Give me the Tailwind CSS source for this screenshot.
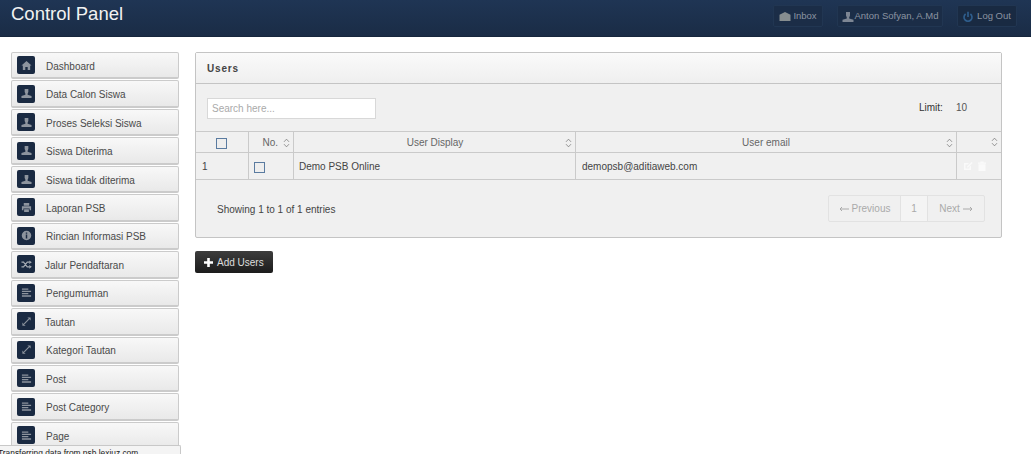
<!DOCTYPE html>
<html lang="en">
<head>
<meta charset="UTF-8" />
<title>Control Panel</title>
<script src="https://cdn.jsdelivr.net/npm/@tailwindcss/browser@4"></script>
</head>
<body class="relative h-[454px] w-[1031px] overflow-hidden bg-white font-['Liberation_Sans',Arial,sans-serif] text-[10px] text-[#4a4a4a]">
<svg class="hidden">
	<symbol id="i-home" viewBox="0 0 12 12"><path fill="currentColor" d="M6 1 L11.500 6 L10 6 L10 11 L7.300 11 L7.300 7.500 L4.700 7.500 L4.700 11 L2 11 L2 6 L.5 6 Z"/></symbol>
	<symbol id="i-user" viewBox="0 0 12 12"><path fill="currentColor" d="M4 1 h4 v3.400 L7.200 6.400 v1 L11.500 8.800 V11 H.5 V8.800 L4.800 7.400 v-1 L4 4.400 Z"/></symbol>
	<symbol id="i-print" viewBox="0 0 12 12"><path fill="currentColor" d="M3 1h6v3H3z M1 4.700h10V9H9.400V7.200H2.600V9H1z M3.400 8h5.200v3H3.400z"/></symbol>
	<symbol id="i-info" viewBox="0 0 12 12"><path fill="currentColor" fill-rule="evenodd" d="M6 .8a5.200 5.200 0 1 0 0 10.400A5.200 5.200 0 0 0 6 .8z M5.200 2.600h1.600v1.600H5.200z M5.200 5h1.600v4.400H5.200z"/></symbol>
	<symbol id="i-shuffle" viewBox="0 0 12 12"><path fill="none" stroke="currentColor" stroke-width="1.300" d="M.5 3.500h2.300l4 5h2.400 M.5 8.500h2.300l4-5h2.400"/><path fill="currentColor" d="M9 1.500l2.800 2-2.800 2z M9 6.500l2.800 2-2.800 2z"/></symbol>
	<symbol id="i-align" viewBox="0 0 12 12"><path fill="currentColor" d="M1 1.500h7v1.500H1z M1 4h10v1.500H1z M1 6.500h7V8H1z M1 9h10v1.500H1z"/></symbol>
	<symbol id="i-resize" viewBox="0 0 12 12"><path fill="none" stroke="currentColor" stroke-width="1.200" d="M3.500 8.500 L8.500 3.500"/><path fill="currentColor" d="M7 1.500h3.500V5z M5 10.500H1.500V7z"/></symbol>
	<symbol id="i-sort" viewBox="0 0 8 12"><path fill="none" stroke="currentColor" stroke-width=".8" d="M1 4.600 L4 1.400 L7 4.600 M1 7.400 L4 10.600 L7 7.400"/></symbol>
</svg>

<header class="flex h-[37px] items-start justify-between border-b border-[#16263c] bg-gradient-to-b from-[#1f3554] to-[#1a2c46]">
	<h1 class="pl-[11px] pt-[2px] text-[18.500px] leading-[24px] text-[#f2f2f2]">Control Panel</h1>
	<div class="flex gap-[14px] pr-[14px] pt-[5px] text-[9.5px] text-[#8b94a1]">
		<a class="flex h-[22px] w-[50px] items-center justify-center gap-[2px] rounded-[2px] border border-[#213652] bg-[#1b2d47] pt-[1px]">
			<svg class="h-[11px] w-[12px] text-[#868d8f]" viewBox="0 0 13 12"><path fill="currentColor" d="M.5 4 L6.500 1 L12.500 4 V11 H.5 Z"/></svg>Inbox
		</a>
		<a class="flex h-[22px] w-[106px] items-center justify-center gap-[1px] rounded-[2px] border border-[#213652] bg-[#1b2d47] pt-[1px]">
			<svg class="h-[12px] w-[12px] text-[#7d8694]"><use href="#i-user"/></svg>Anton Sofyan, A.Md
		</a>
		<a class="flex h-[22px] w-[60px] items-center justify-center gap-[4px] rounded-[2px] border border-[#213652] bg-[#192a42] pt-[1px]">
			<svg class="h-[12px] w-[10px] text-[#2f5f8f]" viewBox="0 0 10 12"><path fill="none" stroke="currentColor" stroke-width="1.600" d="M5 .8V6 M2.600 3A4 4 0 1 0 7.400 3"/></svg>Log Out
		</a>
	</div>
</header>

<div class="flex items-start gap-4 pl-[11px] pt-[15px]">
	<nav class="flex w-[168px] shrink-0 flex-col gap-px">
		<a class="flex h-[27.46px] items-center rounded-[2px] border border-b-2 border-[#cbcbcb] bg-gradient-to-b from-[#f8f8f8] to-[#e9e9e9] pl-[5px]"><span class="flex h-[18px] w-[18px] items-center justify-center rounded-[2px] bg-[#1a2a42] text-[#8d949e]"><svg class="h-[11px] w-[11px]"><use href="#i-home"/></svg></span><span class="ml-[11px] mt-[2px]">Dashboard</span></a>
		<a class="flex h-[27.46px] items-center rounded-[2px] border border-b-2 border-[#cbcbcb] bg-gradient-to-b from-[#f8f8f8] to-[#e9e9e9] pl-[5px]"><span class="flex h-[18px] w-[18px] items-center justify-center rounded-[2px] bg-[#1a2a42] text-[#8d949e]"><svg class="h-[11px] w-[11px]"><use href="#i-user"/></svg></span><span class="ml-[11px] mt-[2px]">Data Calon Siswa</span></a>
		<a class="flex h-[27.46px] items-center rounded-[2px] border border-b-2 border-[#cbcbcb] bg-gradient-to-b from-[#f8f8f8] to-[#e9e9e9] pl-[5px]"><span class="flex h-[18px] w-[18px] items-center justify-center rounded-[2px] bg-[#1a2a42] text-[#8d949e]"><svg class="h-[11px] w-[11px]"><use href="#i-user"/></svg></span><span class="ml-[11px] mt-[2px]">Proses Seleksi Siswa</span></a>
		<a class="flex h-[27.46px] items-center rounded-[2px] border border-b-2 border-[#cbcbcb] bg-gradient-to-b from-[#f8f8f8] to-[#e9e9e9] pl-[5px]"><span class="flex h-[18px] w-[18px] items-center justify-center rounded-[2px] bg-[#1a2a42] text-[#8d949e]"><svg class="h-[11px] w-[11px]"><use href="#i-user"/></svg></span><span class="ml-[11px] mt-[2px]">Siswa Diterima</span></a>
		<a class="flex h-[27.46px] items-center rounded-[2px] border border-b-2 border-[#cbcbcb] bg-gradient-to-b from-[#f8f8f8] to-[#e9e9e9] pl-[5px]"><span class="flex h-[18px] w-[18px] items-center justify-center rounded-[2px] bg-[#1a2a42] text-[#8d949e]"><svg class="h-[11px] w-[11px]"><use href="#i-user"/></svg></span><span class="ml-[11px] mt-[2px]">Siswa tidak diterima</span></a>
		<a class="flex h-[27.46px] items-center rounded-[2px] border border-b-2 border-[#cbcbcb] bg-gradient-to-b from-[#f8f8f8] to-[#e9e9e9] pl-[5px]"><span class="flex h-[18px] w-[18px] items-center justify-center rounded-[2px] bg-[#1a2a42] text-[#8d949e]"><svg class="h-[11px] w-[11px]"><use href="#i-print"/></svg></span><span class="ml-[11px] mt-[2px]">Laporan PSB</span></a>
		<a class="flex h-[27.46px] items-center rounded-[2px] border border-b-2 border-[#cbcbcb] bg-gradient-to-b from-[#f8f8f8] to-[#e9e9e9] pl-[5px]"><span class="flex h-[18px] w-[18px] items-center justify-center rounded-[2px] bg-[#1a2a42] text-[#8d949e]"><svg class="h-[11px] w-[11px]"><use href="#i-info"/></svg></span><span class="ml-[11px] mt-[2px]">Rincian Informasi PSB</span></a>
		<a class="flex h-[27.46px] items-center rounded-[2px] border border-b-2 border-[#cbcbcb] bg-gradient-to-b from-[#f8f8f8] to-[#e9e9e9] pl-[5px]"><span class="flex h-[18px] w-[18px] items-center justify-center rounded-[2px] bg-[#1a2a42] text-[#a4aab2]"><svg class="h-[11px] w-[11px]"><use href="#i-shuffle"/></svg></span><span class="ml-[10px] mt-[2px]">Jalur Pendaftaran</span></a>
		<a class="flex h-[27.46px] items-center rounded-[2px] border border-b-2 border-[#cbcbcb] bg-gradient-to-b from-[#f8f8f8] to-[#e9e9e9] pl-[5px]"><span class="flex h-[18px] w-[18px] items-center justify-center rounded-[2px] bg-[#1a2a42] text-[#8d949e]"><svg class="h-[11px] w-[11px]"><use href="#i-align"/></svg></span><span class="ml-[11px] mt-[2px]">Pengumuman</span></a>
		<a class="flex h-[27.46px] items-center rounded-[2px] border border-b-2 border-[#cbcbcb] bg-gradient-to-b from-[#f8f8f8] to-[#e9e9e9] pl-[5px]"><span class="flex h-[18px] w-[18px] items-center justify-center rounded-[2px] bg-[#1a2a42] text-[#8d949e]"><svg class="h-[11px] w-[11px]"><use href="#i-resize"/></svg></span><span class="ml-[10px] mt-[2px]">Tautan</span></a>
		<a class="flex h-[27.46px] items-center rounded-[2px] border border-b-2 border-[#cbcbcb] bg-gradient-to-b from-[#f8f8f8] to-[#e9e9e9] pl-[5px]"><span class="flex h-[18px] w-[18px] items-center justify-center rounded-[2px] bg-[#1a2a42] text-[#8d949e]"><svg class="h-[11px] w-[11px]"><use href="#i-resize"/></svg></span><span class="ml-[11px] mt-[2px]">Kategori Tautan</span></a>
		<a class="flex h-[27.46px] items-center rounded-[2px] border border-b-2 border-[#cbcbcb] bg-gradient-to-b from-[#f8f8f8] to-[#e9e9e9] pl-[5px]"><span class="flex h-[18px] w-[18px] items-center justify-center rounded-[2px] bg-[#1a2a42] text-[#8d949e]"><svg class="h-[11px] w-[11px]"><use href="#i-align"/></svg></span><span class="ml-[11px] mt-[2px]">Post</span></a>
		<a class="flex h-[27.46px] items-center rounded-[2px] border border-b-2 border-[#cbcbcb] bg-gradient-to-b from-[#f8f8f8] to-[#e9e9e9] pl-[5px]"><span class="flex h-[18px] w-[18px] items-center justify-center rounded-[2px] bg-[#1a2a42] text-[#8d949e]"><svg class="h-[11px] w-[11px]"><use href="#i-align"/></svg></span><span class="ml-[11px] mt-[2px]">Post Category</span></a>
		<a class="flex h-[27.46px] items-center rounded-[2px] border border-b-2 border-[#cbcbcb] bg-gradient-to-b from-[#f8f8f8] to-[#e9e9e9] pl-[5px]"><span class="flex h-[18px] w-[18px] items-center justify-center rounded-[2px] bg-[#1a2a42] text-[#8d949e]"><svg class="h-[11px] w-[11px]"><use href="#i-align"/></svg></span><span class="ml-[11px] mt-[2px]">Page</span></a>
	</nav>

	<main class="w-[807px]">
		<section class="h-[186px] rounded-[2px] border border-[#c4c4c4] bg-[#f0f0f0]">
			<h2 class="flex h-[31px] items-center border-b border-[#c4c4c4] bg-gradient-to-b from-[#fafafa] to-[#efefef] pl-[11px] font-bold tracking-[0.8px] text-[#444]">Users</h2>
			<div class="flex h-[47px] items-center justify-between pl-[11px] pr-[34px]">
				<input class="mt-[2px] h-[21px] w-[169px] border border-[#d8d8d8] bg-white px-[4px] placeholder:text-[#aaa]" placeholder="Search here..." />
				<div class="flex gap-[13px]"><span class="text-[#333]">Limit:</span><span class="text-[#555]">10</span></div>
			</div>
			<div class="grid grid-cols-[53px_45px_282px_381px_1fr] border-t border-[#cacaca] text-[#666]">
				<div class="flex h-[21px] items-center justify-center border-r border-b border-[#cacaca]"><span class="-ml-[1px] mt-[2px] h-[11px] w-[11px] border border-[#5a7ba0] bg-[#eee]"></span></div>
				<div class="flex h-[21px] items-center justify-end gap-[5px] border-r border-b border-[#cacaca] pr-[3px] pt-[1px]">No.<svg class="h-[10px] w-[7px]"><use href="#i-sort"/></svg></div>
				<div class="relative flex h-[21px] items-center justify-center border-r border-b border-[#cacaca] pl-[1px] pt-[1px]">User Display<svg class="absolute right-[3px] h-[10px] w-[7px]"><use href="#i-sort"/></svg></div>
				<div class="relative flex h-[21px] items-center justify-center border-r border-b border-[#cacaca] pt-[1px]">User email<svg class="absolute right-[3px] h-[10px] w-[7px]"><use href="#i-sort"/></svg></div>
				<div class="relative flex h-[21px] items-center border-b border-[#cacaca]"><svg class="absolute right-[3px] h-[10px] w-[7px]"><use href="#i-sort"/></svg></div>
				<div class="flex h-[27px] items-center border-r border-b border-[#cacaca] pl-[6px] text-[#444]">1</div>
				<div class="flex h-[27px] items-center border-r border-b border-[#cacaca] pl-[5px]"><span class="mt-[2px] h-[11px] w-[11px] border border-[#5a7ba0] bg-[#eee]"></span></div>
				<div class="flex h-[27px] items-center border-r border-b border-[#cacaca] pl-[5px] text-[#444]">Demo PSB Online</div>
				<div class="flex h-[27px] items-center border-r border-b border-[#cacaca] pl-[6px] text-[#444]">demopsb@aditiaweb.com</div>
				<div class="flex h-[27px] items-center gap-[4px] border-b border-[#cacaca] pl-[6px] text-[#fafafa]">
					<svg class="h-[10px] w-[10px]" viewBox="0 0 10 10"><path fill="currentColor" d="M1 2h5L4.500 3.500H2.500v4h4V6L8 4.500V9H1z M4 5.500L8.500 1 9.500 2 5 6.500H4z"/></svg>
					<svg class="h-[10px] w-[10px]" viewBox="0 0 10 10"><path fill="currentColor" d="M1 1.500h2.500V.5h3v1H9v1.200H1z M1.500 3.300h7V10h-7z"/></svg>
				</div>
			</div>
			<div class="flex items-start justify-between pl-[21px] pr-[16px] pt-[15px]">
				<p class="pt-[7px] text-[#444]">Showing 1 to 1 of 1 entries</p>
				<div class="flex h-[27px] rounded-[2px] border border-[#e2e2e2] text-[#aaa]">
					<span class="flex w-[72px] items-center justify-center gap-[3px] border-r border-[#e2e2e2]"><svg class="h-[6px] w-[10px]" viewBox="0 0 10 6"><path fill="none" stroke="currentColor" d="M10 3H1 M3 1 L1 3 L3 5"/></svg>Previous</span>
					<span class="flex w-[27px] items-center justify-center border-r border-[#e2e2e2] bg-[#f4f4f4]">1</span>
					<span class="flex w-[56px] items-center justify-center gap-[3px]">Next<svg class="h-[6px] w-[10px]" viewBox="0 0 10 6"><path fill="none" stroke="currentColor" d="M0 3H9 M7 1 L9 3 L7 5"/></svg></span>
				</div>
			</div>
		</section>
		<button class="mt-[13px] flex h-[22px] w-[78px] items-center rounded-[2px] bg-gradient-to-b from-[#3d3d3d] to-[#1c1c1c] pl-[9px] text-[#ddd]">
			<svg class="mr-[4px] h-[9px] w-[9px] text-white" viewBox="0 0 9 9"><path fill="currentColor" d="M3.200 0h2.600v3.200H9v2.600H5.800V9H3.200V5.800H0V3.200h3.200z"/></svg>Add Users
		</button>
	</main>
</div>

<div class="absolute bottom-0 left-0 h-[9px] w-[181px] overflow-hidden rounded-tr-[2px] border-t border-r border-[#c8c8c8] bg-[#f4f4f4]">
	<p class="-ml-[2px] mt-[1px] whitespace-nowrap text-[8.4px] leading-[12px] text-[#222]">Transferring data from psb.lexiuz.com</p>
</div>
</body>
</html>
